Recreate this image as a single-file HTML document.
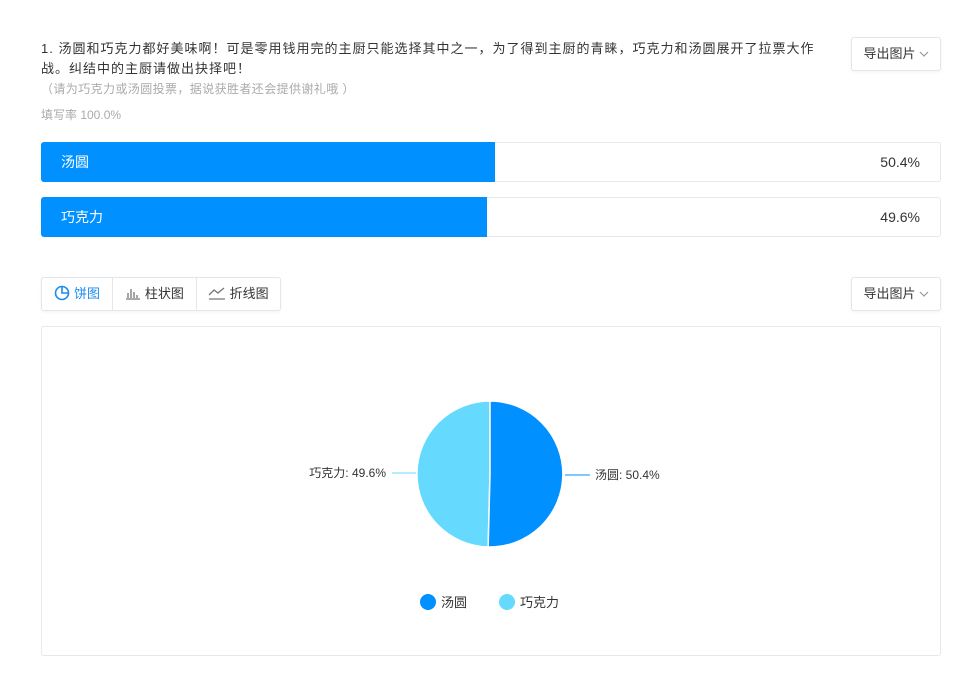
<!DOCTYPE html>
<html><head><meta charset="utf-8"><style>
body{margin:0;background:#fff;font-family:"Liberation Sans","Noto Sans CJK SC",sans-serif;width:975px;height:678px;position:relative;overflow:hidden;color:#333}
.abs{position:absolute}
.btn{position:absolute;border:1px solid #e4e6ea;border-radius:3px;background:#fff;font-size:13px;color:#333;box-shadow:0 1px 3px rgba(0,0,0,.05)}
.bar{position:absolute;left:41px;width:898px;height:38px;border:1px solid #e6e8ec;border-radius:3px;background:#fff;font-size:14px}
.fill{position:absolute;left:-1px;top:-1px;height:40px;background:#0090ff;border-radius:3px 0 0 3px;color:#fff;line-height:40px;padding-left:20px;box-sizing:border-box}
.pct{position:absolute;right:20px;top:0;line-height:38px;color:#333}
.chev{vertical-align:1px;margin-left:3px}
</style></head><body>
<div class="abs" style="left:41px;top:39px;width:800px;font-size:13px;line-height:20px;color:#333;white-space:nowrap;letter-spacing:1px">1. 汤圆和巧克力都好美味啊！可是零用钱用完的主厨只能选择其中之一，为了得到主厨的青睐，巧克力和汤圆展开了拉票大作<br>战。纠结中的主厨请做出抉择吧！</div>
<div class="abs" style="left:41px;top:80px;font-size:12px;color:#aaa;letter-spacing:0.4px">（请为巧克力或汤圆投票，据说获胜者还会提供谢礼哦 ）</div>
<div class="abs" style="left:41px;top:106px;font-size:12px;color:#aaa">填写率 100.0%</div>
<div class="btn" style="left:851px;top:37px;width:88px;height:32px;line-height:32px;text-align:center">导出图片<svg class="chev" width="10" height="6" viewBox="0 0 10 6"><path d="M1 1l4 4 4-4" fill="none" stroke="#999" stroke-width="1.2"/></svg></div>
<div class="bar" style="top:142px"><div class="fill" style="width:454px">汤圆</div><div class="pct">50.4%</div></div>
<div class="bar" style="top:197px"><div class="fill" style="width:446px">巧克力</div><div class="pct">49.6%</div></div>
<div class="btn" style="left:41px;top:277px;width:238px;height:32px;display:flex;line-height:32px">
<div style="width:71px;text-align:center;color:#1a8cf0;border-right:1px solid #e4e6ea"><svg width="16" height="16" viewBox="0 0 16 16" style="vertical-align:-3px"><circle cx="8" cy="8" r="6.5" fill="none" stroke="#1a8cf0" stroke-width="1.6"/><path d="M8 2v6h6" fill="none" stroke="#1a8cf0" stroke-width="1.6"/></svg> 饼图</div>
<div style="width:83px;text-align:center;border-right:1px solid #e4e6ea"><svg width="16" height="14" viewBox="0 0 16 14" style="vertical-align:-2px"><path d="M1 13h14M3 12V7M6 12V3M9 12V6M12 12V9" stroke="#777" stroke-width="1.3"/></svg> 柱状图</div>
<div style="width:84px;text-align:center"><svg width="18" height="14" viewBox="0 0 18 14" style="vertical-align:-2px"><path d="M1 13h16M1 9l5-5 4 3 6-5" fill="none" stroke="#777" stroke-width="1.3"/></svg> 折线图</div>
</div>
<div class="btn" style="left:851px;top:277px;width:88px;height:32px;line-height:32px;text-align:center">导出图片<svg class="chev" width="10" height="6" viewBox="0 0 10 6"><path d="M1 1l4 4 4-4" fill="none" stroke="#999" stroke-width="1.2"/></svg></div>
<div class="abs" style="left:41px;top:326px;width:898px;height:328px;border:1px solid #e6e8ec;border-radius:3px"></div>
<svg class="abs" style="left:0;top:0" width="975" height="678">
<path d="M490 474 L488.17 546.98 A73 73 0 0 1 490 401 Z" fill="#66d9ff" stroke="#fff" stroke-width="1.5"/>
<path d="M490 474 L490 401 A73 73 0 1 1 488.17 546.98 Z" fill="#0090ff" stroke="#fff" stroke-width="1.5"/>
<path d="M565 475h25" stroke="#0090ff"/><path d="M392 473h24" stroke="#66d9ff"/>
<text x="595" y="479" font-size="12" fill="#333" font-family="Liberation Sans,Noto Sans CJK SC,sans-serif">汤圆: 50.4%</text>
<text x="386" y="477" font-size="12" fill="#333" text-anchor="end" font-family="Liberation Sans,Noto Sans CJK SC,sans-serif">巧克力: 49.6%</text>
<circle cx="428" cy="602" r="8" fill="#0090ff"/><circle cx="507" cy="602" r="8" fill="#66d9ff"/>
<text x="441" y="607" font-size="13" fill="#333" font-family="Liberation Sans,Noto Sans CJK SC,sans-serif">汤圆</text>
<text x="520" y="607" font-size="13" fill="#333" font-family="Liberation Sans,Noto Sans CJK SC,sans-serif">巧克力</text>
</svg>
</body></html>
